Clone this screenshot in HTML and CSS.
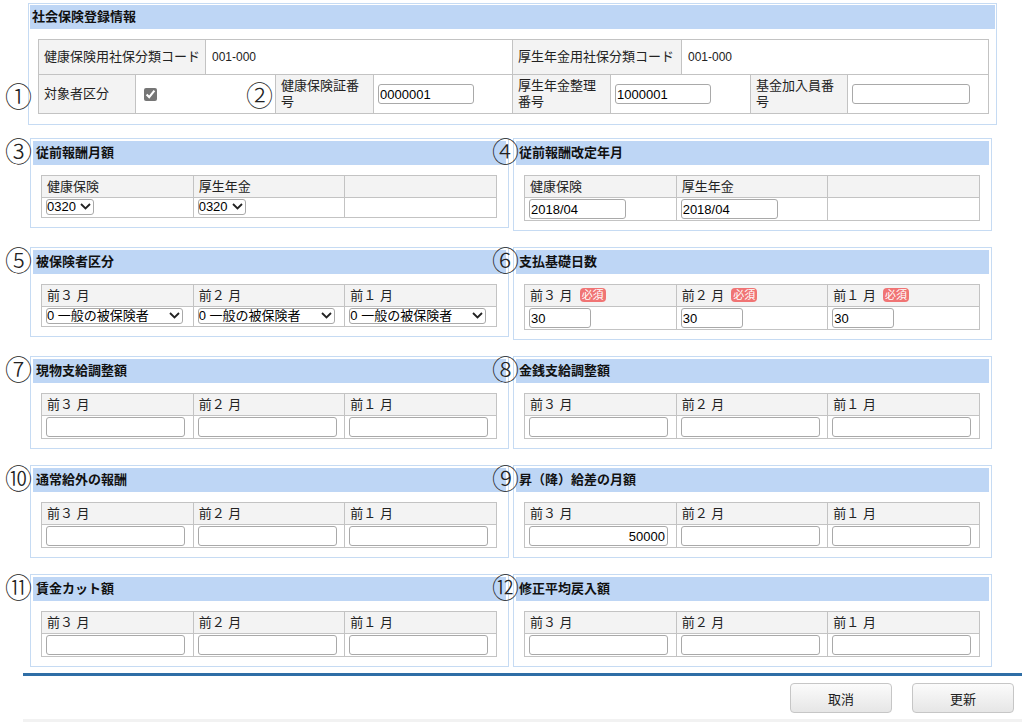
FILE: index.html
```html
<!DOCTYPE html>
<html lang="ja">
<head>
  <meta charset="UTF-8" />
  <title>社会保険登録情報</title>
  <link rel="stylesheet" href="styles.css">
</head>
<body>
  <div class="page">

    <section class="panel panel-main">
      <span class="mark mark-1">①</span>
      <span class="mark mark-2">②</span>
      <h2 class="panel-title">社会保険登録情報</h2>
      <table class="grid-table top-table">
        <colgroup><col style="width:167px"><col style="width:307px"><col style="width:169px"><col style="width:307px"></colgroup>
        <tr>
          <th>健康保険用社保分類コード</th>
          <td class="value">001-000</td>
          <th>厚生年金用社保分類コード</th>
          <td class="value">001-000</td>
        </tr>
      </table>
      <table class="grid-table top-table second">
        <colgroup>
          <col style="width:97px"><col style="width:140px"><col style="width:98px"><col style="width:139px">
          <col style="width:98px"><col style="width:140px"><col style="width:97px"><col style="width:141px">
        </colgroup>
        <tr>
          <th>対象者区分</th>
          <td><input type="checkbox" class="chk" checked></td>
          <th>健康保険証番号</th>
          <td><input type="text" class="txt w96" value="0000001"></td>
          <th>厚生年金整理番号</th>
          <td><input type="text" class="txt w96" value="1000001"></td>
          <th>基金加入員番号</th>
          <td><input type="text" class="txt w117" value=""></td>
        </tr>
      </table>
    </section>

    <div class="panel-grid">

      <section class="panel">
        <span class="mark mark-left">③</span>
        <h2 class="panel-title">従前報酬月額</h2>
        <table class="grid-table">
          <tr><th>健康保険</th><th>厚生年金</th><th></th></tr>
          <tr class="select-row">
            <td>
              <span class="sel-wrap">
                <select class="sel"><option>0320</option></select>
                <svg class="chevron" width="11" height="7" viewBox="0 0 11 7"><path d="M1 1 L5.5 5.5 L10 1" fill="none" stroke="#222" stroke-width="1.8"/></svg>
              </span>
            </td>
            <td>
              <span class="sel-wrap">
                <select class="sel"><option>0320</option></select>
                <svg class="chevron" width="11" height="7" viewBox="0 0 11 7"><path d="M1 1 L5.5 5.5 L10 1" fill="none" stroke="#222" stroke-width="1.8"/></svg>
              </span>
            </td>
            <td></td>
          </tr>
        </table>
      </section>

      <section class="panel">
        <span class="mark mark-right">④</span>
        <h2 class="panel-title">従前報酬改定年月</h2>
        <table class="grid-table">
          <tr><th>健康保険</th><th>厚生年金</th><th></th></tr>
          <tr>
            <td><input type="text" class="txt w97" value="2018/04"></td>
            <td><input type="text" class="txt w97" value="2018/04"></td>
            <td></td>
          </tr>
        </table>
      </section>

      <section class="panel">
        <span class="mark mark-left">⑤</span>
        <h2 class="panel-title">被保険者区分</h2>
        <table class="grid-table">
          <tr><th>前３ 月</th><th>前２ 月</th><th>前１ 月</th></tr>
          <tr class="select-row">
            <td>
              <span class="sel-wrap">
                <select class="sel wide"><option>0 一般の被保険者</option></select>
                <svg class="chevron" width="11" height="7" viewBox="0 0 11 7"><path d="M1 1 L5.5 5.5 L10 1" fill="none" stroke="#222" stroke-width="1.8"/></svg>
              </span>
            </td>
            <td>
              <span class="sel-wrap">
                <select class="sel wide"><option>0 一般の被保険者</option></select>
                <svg class="chevron" width="11" height="7" viewBox="0 0 11 7"><path d="M1 1 L5.5 5.5 L10 1" fill="none" stroke="#222" stroke-width="1.8"/></svg>
              </span>
            </td>
            <td>
              <span class="sel-wrap">
                <select class="sel wide"><option>0 一般の被保険者</option></select>
                <svg class="chevron" width="11" height="7" viewBox="0 0 11 7"><path d="M1 1 L5.5 5.5 L10 1" fill="none" stroke="#222" stroke-width="1.8"/></svg>
              </span>
            </td>
          </tr>
        </table>
      </section>

      <section class="panel">
        <span class="mark mark-right">⑥</span>
        <h2 class="panel-title">支払基礎日数</h2>
        <table class="grid-table">
          <tr>
            <th>前３ 月<span class="required">必須</span></th>
            <th>前２ 月<span class="required">必須</span></th>
            <th>前１ 月<span class="required">必須</span></th>
          </tr>
          <tr>
            <td><input type="text" class="txt w62" value="30"></td>
            <td><input type="text" class="txt w62" value="30"></td>
            <td><input type="text" class="txt w62" value="30"></td>
          </tr>
        </table>
      </section>

      <section class="panel">
        <span class="mark mark-left">⑦</span>
        <h2 class="panel-title">現物支給調整額</h2>
        <table class="grid-table">
          <tr><th>前３ 月</th><th>前２ 月</th><th>前１ 月</th></tr>
          <tr>
            <td><input type="text" class="txt amount"></td>
            <td><input type="text" class="txt amount"></td>
            <td><input type="text" class="txt amount"></td>
          </tr>
        </table>
      </section>

      <section class="panel">
        <span class="mark mark-right">⑧</span>
        <h2 class="panel-title">金銭支給調整額</h2>
        <table class="grid-table">
          <tr><th>前３ 月</th><th>前２ 月</th><th>前１ 月</th></tr>
          <tr>
            <td><input type="text" class="txt amount"></td>
            <td><input type="text" class="txt amount"></td>
            <td><input type="text" class="txt amount"></td>
          </tr>
        </table>
      </section>

      <section class="panel">
        <span class="mark mark-left">⑩</span>
        <h2 class="panel-title">通常給外の報酬</h2>
        <table class="grid-table">
          <tr><th>前３ 月</th><th>前２ 月</th><th>前１ 月</th></tr>
          <tr>
            <td><input type="text" class="txt amount"></td>
            <td><input type="text" class="txt amount"></td>
            <td><input type="text" class="txt amount"></td>
          </tr>
        </table>
      </section>

      <section class="panel">
        <span class="mark mark-right">⑨</span>
        <h2 class="panel-title">昇（降）給差の月額</h2>
        <table class="grid-table">
          <tr><th>前３ 月</th><th>前２ 月</th><th>前１ 月</th></tr>
          <tr>
            <td><input type="text" class="txt amount" value="50000"></td>
            <td><input type="text" class="txt amount"></td>
            <td><input type="text" class="txt amount"></td>
          </tr>
        </table>
      </section>

      <section class="panel">
        <span class="mark mark-left">⑪</span>
        <h2 class="panel-title">賃金カット額</h2>
        <table class="grid-table">
          <tr><th>前３ 月</th><th>前２ 月</th><th>前１ 月</th></tr>
          <tr>
            <td><input type="text" class="txt amount"></td>
            <td><input type="text" class="txt amount"></td>
            <td><input type="text" class="txt amount"></td>
          </tr>
        </table>
      </section>

      <section class="panel">
        <span class="mark mark-right">⑫</span>
        <h2 class="panel-title">修正平均戻入額</h2>
        <table class="grid-table">
          <tr><th>前３ 月</th><th>前２ 月</th><th>前１ 月</th></tr>
          <tr>
            <td><input type="text" class="txt amount"></td>
            <td><input type="text" class="txt amount"></td>
            <td><input type="text" class="txt amount"></td>
          </tr>
        </table>
      </section>

    </div>

    <div class="footer">
      <div class="actions">
        <button class="btn">取消</button>
        <button class="btn">更新</button>
      </div>
      <div class="footer-band"></div>
    </div>

  </div>
</body>
</html>
```

FILE: styles.css
```css
:root {
  --panel-border: #c6dbf3;
  --title-bg: #bed6f5;
  --cell-border: #c3c3c3;
  --head-bg: #f3f3f3;
  --text: #222;
  --accent: #2f6ea6;
}
* { box-sizing: border-box; }
body {
  margin: 0;
  font-family: "Liberation Sans", "Noto Sans CJK JP", sans-serif;
  font-size: 13px;
  color: var(--text);
  background: #fff;
}
.page {
  padding-top: 3px;
}

/* panels */
.panel {
  position: relative;
  border: 1px solid var(--panel-border);
  padding: 2px;
}
.panel-main {
  width: 969px;
  margin-left: 28px;
  margin-bottom: 13px;
  padding: 1px 1px 10px;
}
.panel-title {
  margin: 0;
  height: 24px;
  line-height: 24px;
  padding-left: 3px;
  background: var(--title-bg);
  font-size: 13px;
  font-weight: bold;
  color: #111;
}
.panel-main .panel-title {
  padding-left: 2px;
}
.panel-grid {
  display: grid;
  grid-template-columns: 479px 479px;
  column-gap: 4px;
  row-gap: 16px;
  margin-left: 30px;
  align-items: start;
}

/* circled annotations */
.mark {
  position: absolute;
  width: 23px;
  height: 24px;
  line-height: 24px;
  text-align: center;
  font-family: "Noto Sans CJK JP", sans-serif;
  font-size: 27px;
  font-weight: 300;
  color: #222;
  z-index: 2;
}
.mark-1 { left: -24px; top: 80px; }
.mark-2 { left: 217px; top: 79px; }
.mark-left { left: -26px; top: 0; }
.mark-right { left: -22px; top: 0; }

/* tables */
.grid-table {
  border-collapse: separate;
  border-spacing: 0;
  table-layout: fixed;
  width: 456px;
  margin: 10px 0 7px 8px;
  border-top: 1px solid var(--cell-border);
  border-left: 1px solid var(--cell-border);
}
.grid-table th,
.grid-table td {
  border-right: 1px solid var(--cell-border);
  border-bottom: 1px solid var(--cell-border);
  text-align: left;
  vertical-align: middle;
}
.grid-table th {
  background: var(--head-bg);
  font-weight: normal;
  line-height: 21px;
  padding: 0 5px;
  white-space: nowrap;
}
.grid-table td {
  padding: 1px 4px;
}
.grid-table .select-row td {
  padding: 1px 4px 2px;
}
.top-table {
  width: 950px;
  margin: 10px 0 0 8px;
}
.top-table th {
  line-height: 16px;
  padding: 9px 5px;
  white-space: normal;
}
.top-table td {
  padding: 0 4px;
}
.top-table td.value {
  font-size: 12px;
  padding-left: 6px;
}
.top-table.second {
  margin-top: 0;
  border-top: none;
}
.top-table.second th {
  padding: 3px 5px;
}

/* form controls */
.txt {
  display: block;
  height: 20px;
  padding: 0 2px 0 1px;
  border: 1px solid #a9a9a9;
  border-radius: 3px;
  font-family: inherit;
  font-size: 13px;
  color: #000;
  margin: 0;
}
.w96 { width: 96px; }
.w97 { width: 97px; }
.w117 { width: 118px; }
.w62 { width: 62px; }
.amount {
  width: 139px;
  text-align: right;
}
.sel-wrap {
  position: relative;
  display: flex;
  width: max-content;
}
.sel {
  appearance: none;
  height: 16px;
  margin: 0;
  padding: 0 17px 0 0;
  font-family: inherit;
  font-size: 13px;
  line-height: 14px;
  color: #000;
  border: 1px solid #a9a9a9;
  border-radius: 3px;
  background: #fff;
}
.sel.wide {
  width: 137px;
}
.chevron {
  position: absolute;
  right: 3px;
  top: 4px;
  pointer-events: none;
}
.chk {
  display: block;
  width: 13px;
  height: 13px;
  margin: 0 0 0 4px;
  accent-color: #767676;
}
.required {
  display: inline-block;
  margin-left: 7px;
  padding: 0 2px;
  height: 14px;
  line-height: 14px;
  font-size: 11px;
  color: #fff;
  background: #f07474;
  border-radius: 4px;
  vertical-align: 1px;
}

/* footer */
.footer {
  margin: 6px 0 0 23px;
  border-top: 3px solid var(--accent);
}
.actions {
  display: flex;
  justify-content: flex-end;
  gap: 20px;
  padding: 7px 8px 6px;
}
.btn {
  width: 102px;
  height: 30px;
  border: 1px solid #c6c6c6;
  border-radius: 4px;
  background: linear-gradient(#fbfbfb, #e6e6e6);
  font-family: inherit;
  font-size: 13px;
  color: #222;
  cursor: pointer;
}
.footer-band {
  height: 10px;
  background: #f2f2f2;
}
```
